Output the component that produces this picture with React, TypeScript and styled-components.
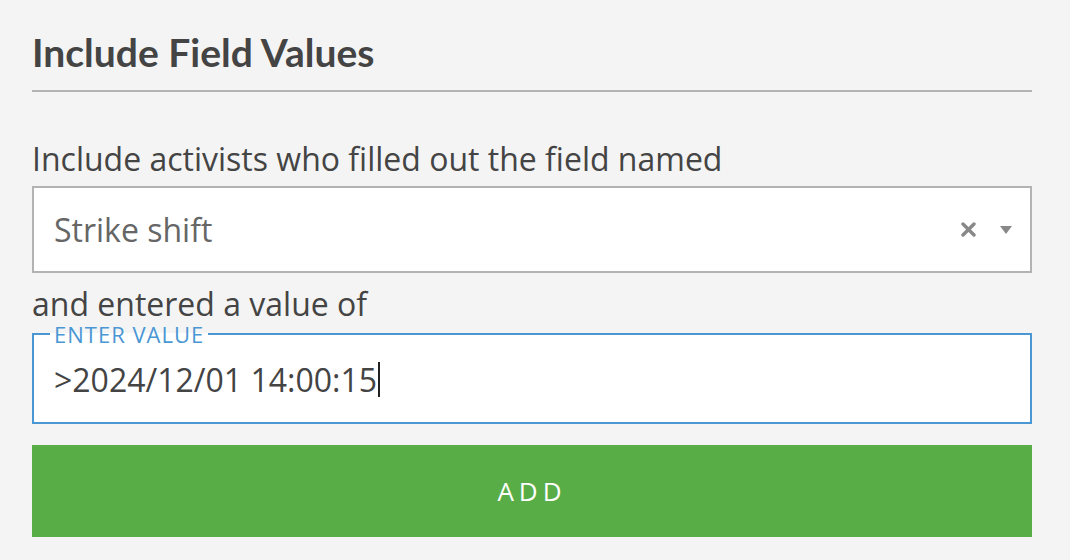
import React from "react";
import styled, { createGlobalStyle } from "styled-components";

const Global = createGlobalStyle`
  html, body { margin: 0; padding: 0; background: #f4f4f4; }
  body { font-family: "Open Sans", "Noto Sans", sans-serif; color: #444; }
`;

const Panel = styled.div`
  width: 1000px;
  padding: 0 0 0 32px;
  display: flex;
  flex-direction: column;
`;

const Title = styled.h2`
  margin: 0;
  padding-top: 29px;
  font-family: "Lato", sans-serif;
  font-weight: 700;
  font-size: 39px;
  line-height: 46px;
  color: #444;
  padding-bottom: 15px;
  border-bottom: 2px solid #b3b3b3;
`;

const Label = styled.div<{ $top: number; $bottom?: number }>`
  margin-top: ${(p) => p.$top}px;
  margin-bottom: ${(p) => p.$bottom ?? 0}px;
  font-size: 32px;
  line-height: 36px;
  color: #444;
`;

const Select = styled.div`
  margin-top: 9px;
  height: 83px;
  background: #fff;
  border: 2px solid #b3b3b3;
  display: flex;
  align-items: center;
  padding: 0 18px 0 20px;
`;

const SelectValue = styled.span`
  flex: 1;
  font-size: 32px;
  color: #666;
`;

const SelectIcons = styled.span`
  display: flex;
  align-items: center;
  gap: 24px;
`;

const Fieldset = styled.fieldset`
  margin: 0;
  padding: 0 20px;
  border: 2px solid #4a97d4;
  background: #fff;
  height: 101px;
  box-sizing: border-box;
  min-width: 0;
`;

const Legend = styled.legend`
  padding: 0 4px;
  margin-left: -4px;
  font-size: 22px;
  line-height: 22px;
  letter-spacing: 1px;
  color: #4a97d4;
`;

const InputText = styled.div`
  display: flex;
  align-items: center;
  height: 68px;
  font-size: 32px;
  color: #444;
`;

const Caret = styled.span`
  display: inline-block;
  width: 2px;
  height: 35px;
  background: #222;
  margin-left: 1px;
`;

const AddButton = styled.button`
  margin-top: 21px;
  height: 92px;
  border: none;
  background: #58ad47;
  color: #fff;
  font-family: "Open Sans", sans-serif;
  font-size: 26px;
  letter-spacing: 5px;
  padding: 0;
  cursor: pointer;
`;

export default function App() {
  return (
    <>
      <Global />
      <Panel>
        <Title>Include Field Values</Title>
        <Label $top={49}>Include activists who filled out the field named</Label>
        <Select>
          <SelectValue>Strike shift</SelectValue>
          <SelectIcons>
            <svg width="15" height="15" viewBox="0 0 15 15">
              <path d="M2 2 L13 13 M13 2 L2 13" stroke="#888" strokeWidth="3.4" strokeLinecap="round" />
            </svg>
            <svg width="12" height="8" viewBox="0 0 12 8">
              <path d="M0 0 H12 L6 8 Z" fill="#888" />
            </svg>
          </SelectIcons>
        </Select>
        <Label $top={13} $bottom={1}>and entered a value of</Label>
        <Fieldset>
          <Legend>ENTER VALUE</Legend>
          <InputText>
            &gt;2024/12/01 14:00:15
            <Caret />
          </InputText>
        </Fieldset>
        <AddButton>ADD</AddButton>
      </Panel>
    </>
  );
}
